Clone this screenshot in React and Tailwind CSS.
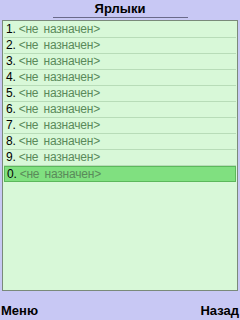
import React from 'react';

const items = ['1', '2', '3', '4', '5', '6', '7', '8', '9', '0'];

const App = () => {
    return (
        <div className="w-[240px] h-[320px] bg-[#c8c8f4] flex flex-col overflow-hidden" style={{ fontFamily: '"Liberation Sans", Arial, sans-serif' }}>
            {/* title */}
            <div className="h-[20px] flex flex-col items-center pt-[1px]">
                <div className="text-[13px] leading-[15px] font-bold text-black">Ярлыки</div>
                <div className="w-[135px] h-[1px] bg-[#6a6a8a] mt-[1px]"></div>
            </div>

            {/* list */}
            <div className="mx-[2px] h-[274px] bg-[#d8f8d8] border border-[#7a8a7a] p-[1px]">
                {items.map((n, i) => {
                    const selected = i === items.length - 1;
                    return (
                        <div
                            key={n}
                            className={`h-[16px] flex items-center pl-[2px] text-[12px] leading-[14px] tracking-[-0.2px] ${selected
                                ? 'bg-[#80e080] border border-[#5cb85c]'
                                : 'border-b border-[#b8dcb8]'
                                }`}
                        >
                            <span className="text-black">{n}.</span>
                            <span className="text-[#5a8a5a] ml-[3px]">&lt;не <span className="ml-[2px]">назначен&gt;</span></span>
                        </div>
                    );
                })}
            </div>

            {/* softkeys */}
            <div className="flex-1 flex items-center justify-between px-[1px] pt-[10px]">
                <span className="text-[13px] font-bold text-black">Меню</span>
                <span className="text-[13px] font-bold text-black">Назад</span>
            </div>
        </div>
    );
};

export default App;
